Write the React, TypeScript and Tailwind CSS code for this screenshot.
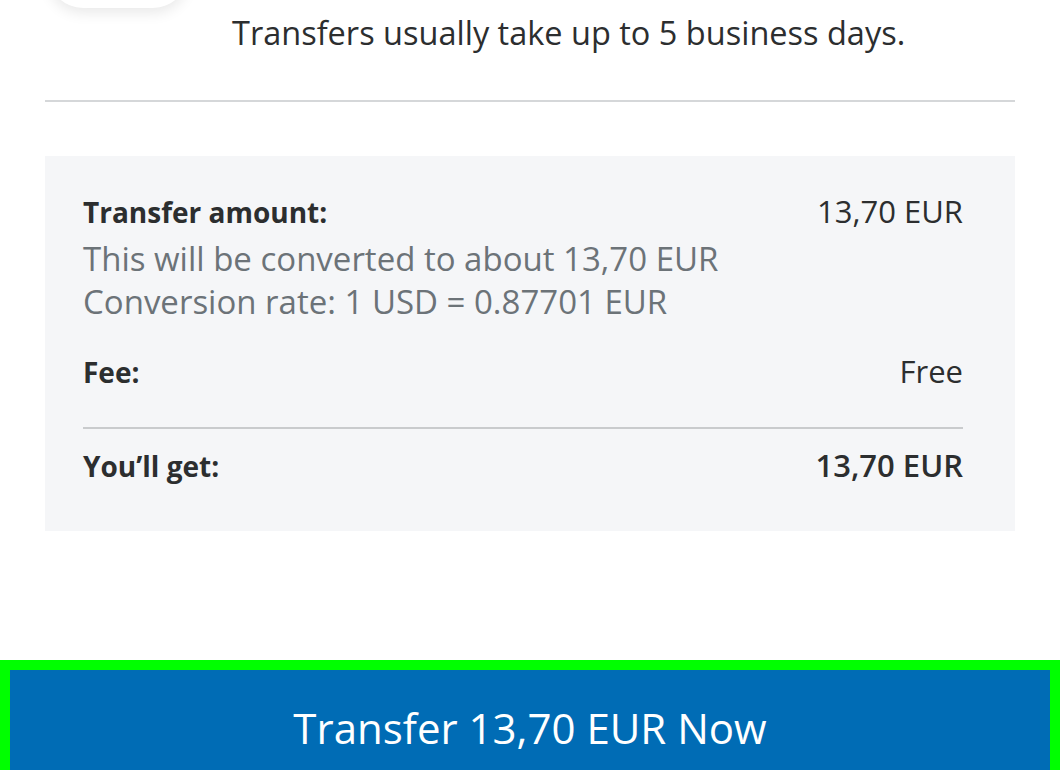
import React from "react";

const font = { fontFamily: "'Open Sans', 'Noto Sans', sans-serif" };

function Row({ label, value, bold }: { label: string; value: string; bold?: boolean }) {
  return (
    <div className="flex items-baseline justify-between leading-[38px]">
      <span className="font-bold text-[28px] text-[#2c2e2f]">{label}</span>
      <span className={`text-[31px] text-[#2c2e2f] ${bold ? "font-semibold" : ""}`}>{value}</span>
    </div>
  );
}

export default function App() {
  return (
    <div className="relative w-[1060px] h-[770px] bg-white overflow-hidden flex flex-col" style={font}>
      {/* bottom edge of the recipient avatar above */}
      <div className="absolute left-[48px] -top-[62px] w-[140px] h-[70px] rounded-full bg-white shadow-[0_5px_14px_rgba(0,0,0,0.09)]" />

      <p className="pl-[232px] pt-[13px] text-[32.5px] leading-[40px] text-[#2c2e2f]">
        Transfers usually take up to 5 business days.
      </p>

      <div className="mx-[45px] mt-[47px] h-[2px] bg-[#d5d7d9]" />

      <div className="mx-[45px] mt-[54px] h-[375px] bg-[#f5f6f8] pl-[38px] pr-[52px] pt-[36px]">
        <Row label="Transfer amount:" value="13,70 EUR" />
        <div className="text-[33px] leading-[43px] text-[#6c7378] mt-[6px]">
          <p>This will be converted to about 13,70 EUR</p>
          <p>Conversion rate: 1 USD = 0.87701 EUR</p>
        </div>
        <div className="mt-[29px]">
          <Row label="Fee:" value="Free" />
        </div>
        <div className="mt-[36px] h-[2px] bg-[#c9cbcd]" />
        <div className="mt-[17px]">
          <Row label="You’ll get:" value="13,70 EUR" bold />
        </div>
      </div>

      <div className="mt-auto h-[110px] border-[10px] border-b-0 border-[#00ff00] bg-[#006cb5] flex justify-center pt-[30px]">
        <span className="text-white text-[42px] leading-[56px]">Transfer 13,70 EUR Now</span>
      </div>
    </div>
  );
}
